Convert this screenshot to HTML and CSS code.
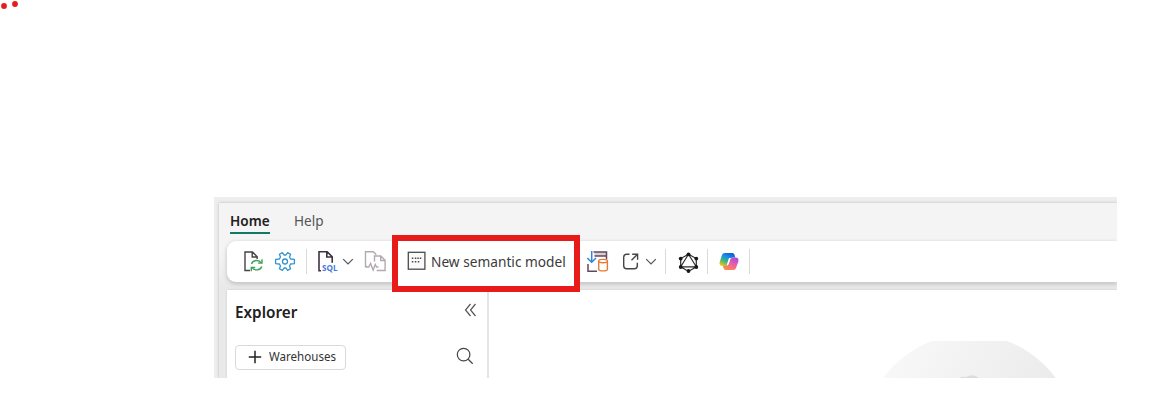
FILE: index.html
```html
<!DOCTYPE html>
<html lang="en">
<head>
<meta charset="utf-8">
<title>Warehouse</title>
<link rel="stylesheet" href="styles.css">
</head>
<body>
<svg class="dots" width="24" height="12" viewBox="0 0 24 12"><circle cx="4" cy="6" r="2.9" fill="#e81b1b"/><circle cx="15" cy="4" r="2.9" fill="#e81b1b"/></svg>
<div class="frame">
 <div class="app">
  <nav class="tabs"><a class="tab active"><span class="t-home">Home</span></a><a class="tab"><span class="t-help">Help</span></a></nav>
  <div class="toolbar">
   <svg class="icon refresh" viewBox="0 0 24 24"><path d="M9 21.500H4V3h7.500l4.700 4.800v2.200M11.200 3.200v4.800h4.800" fill="none" stroke="#454345" stroke-width="1.400"/><path d="M10.500 15c1.200-4.300 7.800-4.600 9.700-1.200M21 10.200v3.900h-3.900M20.800 17.500c-1.200 4.200-7.700 4.400-9.700 1.200M10.300 22.300v-3.900h3.900" fill="none" stroke="#3fa257" stroke-width="1.400"/></svg>
   <svg class="icon gear" viewBox="0 0 24 24"><g fill="none" stroke="#3294cf" stroke-width="1.300" stroke-linejoin="round"><path d="M9.400 3.600 11 6h2l1.600-2.400 3 1.700L16.500 8l1.100 2 3.800.4v4.200l-3.800.4-1.100 2 1.100 2.700-3 1.700L13 19h-2l-1.600 2.400-3-1.700L7.500 17l-1.100-2-3.800-.4v-4.200l3.800-.4 1.100-2-1.100-2.700z"/><circle cx="12" cy="12.500" r="2.500"/></g></svg>
   <i class="sep s1"></i>
   <svg class="icon sql" viewBox="0 0 24 24"><path d="M6 21.800H4V2.800h8.200l5 5v6M11.800 3v5H17" fill="none" stroke="#3d353f" stroke-width="1.600"/><text x="7" y="22.300" textLength="15.500" lengthAdjust="spacingAndGlyphs">SQL</text></svg>
   <svg class="chev c1" viewBox="0 0 12 12"><path d="M1.200 3.200 6 8l4.800-4.800" fill="none" stroke="#555" stroke-width="1.200"/></svg>
   <svg class="icon copy" viewBox="0 0 24 24"><g fill="none" stroke="#b3a9b3" stroke-width="1.400"><path d="M4 17.500H2.500V2.800h7.800l3 3M11.500 12.500V7h6.300l4.300 4.300v10.200h-8.500M17.700 7.200v4.300h4.300M2.500 18h3.200l1.900-3.500 2.500 6.500 2.200-5.500 1.200 2.500h2"/></g></svg>
   <div class="callout">
    <svg class="model" viewBox="0 0 20 20"><rect x="1.300" y="1.300" width="16.600" height="16.900" fill="#fafafa" stroke="#4b4b4b" stroke-width="1.300"/><path d="M4.800 7.300h1.500M7.800 7.300h1.500M10.300 7.300h1.500M12.800 7.300h1.500M4.800 10.800h1.500M7.800 10.800h1.500M10.800 10.800h1.500" stroke="#494949" stroke-width="1.500"/></svg>
    <span class="t-model">New semantic model</span>
   </div>
   <svg class="icon load" viewBox="0 0 24 24"><path d="M8.500 3.200h12V7H8.500" fill="#d3d3ce"/><path d="M7.500 3h13v7.500M8.500 7h12M2 15v7.200h9" fill="none" stroke="#64475e" stroke-width="1.500"/><path d="M5.700 2v11M1.300 9l4.400 4.300L10 9" fill="none" stroke="#3481df" stroke-width="1.500"/><path d="M12.700 12.200v8c0 2.200 8.700 2.200 8.700 0v-8" fill="#fff" stroke="#e77a30" stroke-width="1.400"/><ellipse cx="17.050" cy="12.100" rx="4.350" ry="1.700" fill="#fff" stroke="#e77a30" stroke-width="1.400"/></svg>
   <svg class="icon share" viewBox="0 0 24 24"><path d="M10.500 5.200H7.700a3 3 0 0 0-3 3v8.600a3 3 0 0 0 3 3h7.600a3 3 0 0 0 3-3v-3M13.200 5.200h5.400v5.500M18.500 5.300l-6 6" fill="none" stroke="#454545" stroke-width="1.400"/></svg>
   <svg class="chev c2" viewBox="0 0 12 12"><path d="M1.200 3.200 6 8l4.800-4.800" fill="none" stroke="#555" stroke-width="1.200"/></svg>
   <i class="sep s2"></i>
   <svg class="icon graph" viewBox="0 0 24 24"><path d="m12.500 5.300 7.800 4.200v8.300l-7.800 4.600-7.800-4.600V9.500zM12.500 5.300l7.800 12.500H4.700z" fill="none" stroke="#2b2b2b" stroke-width="1.200"/><g fill="#181818"><circle cx="12.500" cy="5.300" r="1.900"/><circle cx="20.300" cy="9.600" r="1.900"/><circle cx="20.300" cy="18" r="1.900"/><circle cx="12.500" cy="22" r="1.900"/><circle cx="4.700" cy="18" r="1.900"/><circle cx="4.700" cy="9.600" r="1.900"/></g></svg>
   <i class="sep s3"></i>
   <svg class="icon copilot" viewBox="0 0 24 24"><defs><linearGradient id="cool" x1="0.8" y1="0" x2="0.2" y2="1"><stop offset="0" stop-color="#1756cc"/><stop offset=".4" stop-color="#1697e5"/><stop offset=".67" stop-color="#45b578"/><stop offset="1" stop-color="#efc51b"/></linearGradient><linearGradient id="warm" x1="0.8" y1="0" x2="0.2" y2="1"><stop offset="0" stop-color="#a44be5"/><stop offset=".5" stop-color="#f0619f"/><stop offset="1" stop-color="#fb923d"/></linearGradient></defs><path d="M8 4h7.400c1.400 0 1.800 1 2.200 2.200l.7 2.300h-2.500c-1.700 0-2.500.8-3 2.300l-1.500 4.600c-.4 1.100-1 1.500-2.200 1.500H5.500c-2.400 0-3.500-1.500-2.800-4L4.800 6.500C5.400 4.800 6.200 4 8 4z" fill="url(#cool)"/><path d="M16 21H8.600c-1.400 0-1.800-1-2.200-2.200l-.5-1.900h2.800c1.500 0 2.200-.8 2.700-2.300l1.500-4.500c.4-1.100 1-1.600 2.200-1.600h3.400c2.400 0 3.500 1.500 2.800 4l-2.100 6C18.600 20.200 17.800 21 16 21z" fill="url(#warm)"/><path d="m12 9 2.400.1c-.8.500-1 1.100-1.300 2l-1.400 4.200-1.300 1.200c-.5.200-1 .1-.7-.5z" fill="#fff"/></svg>
   <i class="sep s4"></i>
  </div>
  <div class="workspace">
   <aside class="explorer">
    <header class="head"><h1><span class="t-exp">Explorer</span></h1><svg class="collapse" viewBox="0 0 14 14"><path d="M7.500 1 2.500 7l5 6M12.500 1l-5 6 5 6" fill="none" stroke="#555" stroke-width="1.200"/></svg></header>
    <div class="row"><button class="add"><svg viewBox="0 0 14 14"><path d="M7 .8v12.400M.8 7h12.400" stroke="#222" stroke-width="1.500"/></svg><span class="t-wh">Warehouses</span></button><svg class="search" viewBox="0 0 18 18"><circle cx="7.600" cy="7.600" r="6.300" fill="none" stroke="#454545" stroke-width="1.200"/><path d="m12.200 12.200 4.500 4.500" stroke="#454545" stroke-width="1.300"/></svg></div>
   </aside>
   <main class="canvas"><svg class="art" viewBox="0 0 180 37"><defs><linearGradient id="disc" gradientUnits="userSpaceOnUse" x1="20" y1="0" x2="150" y2="80"><stop offset="0" stop-color="#f8f8f8"/><stop offset="1" stop-color="#ebebeb"/></linearGradient></defs><circle cx="89.500" cy="100" r="106.800" fill="url(#disc)"/><path d="M79 37q3-2 7-1 7-4 13 1z" fill="#dcdcdc"/></svg></main>
  </div>
 </div>
</div>
</body>
</html>
```
FILE: styles.css
```css
* { box-sizing: border-box; }
body { margin: 0; width: 1153px; height: 401px; overflow: hidden; background: #fff; font-family: "Noto Sans", "Open Sans", sans-serif; color: #292929; }
svg { display: block; flex: none; }
.dots { margin-bottom: 185px; }
.frame { margin-left: 214px; width: 903px; height: 181px; background: #eee; padding: 6px 0 0 5px; overflow: hidden; }
.app { height: 175px; background: linear-gradient(#f4f4f4 50px, #e9e9e9 85px); box-shadow: 0 0 3px #bbb; }
.tabs { height: 38px; display: flex; padding-left: 11px; gap: 24px; }
.tab { height: 31px; line-height: 35px; font-size: 14px; color: #555; white-space: nowrap; }
.tab.active { width: 40px; color: #202020; font-weight: 600; border-bottom: 2px solid #117865; }
.tab span, .t-model, .t-exp, .t-wh { display: inline-block; transform-origin: left; }
.t-home { transform: scale(.97, 1.03); }
.t-help { transform: scale(.97, 1.04); }
.toolbar { height: 41px; margin: 0 0 8px 8px; background: #fff; border-radius: 9px 0 0 9px; display: flex; align-items: center; box-shadow: 0 0 2px #ddd, 0 2px 4px #bcbcbc; }
.icon { width: 24px; height: 24px; margin-top: -1px; }
.refresh { margin-left: 14px; }
.gear { margin-left: 8px; }
.sep { width: 1px; height: 25px; background: #dadada; flex: none; }
.s1 { margin-left: 9px; }
.sql { margin-left: 8px; }
.sql text { font: 700 8.5px "Open Sans", sans-serif; fill: #4478d8; }
.chev { width: 12px; height: 12px; }
.c1 { margin-left: 3px; }
.copy { margin-left: 9px; }
.callout { width: 188px; height: 57px; margin: 4px 0 0 5px; border: 6px solid #e81b1b; background: #fff; z-index: 1; position: relative; display: flex; align-items: center; padding: 0 0 4px 9px; flex: none; }
.model { width: 20px; height: 20px; margin-top: -1px; }
.t-model { margin-left: 4px; font-size: 14px; line-height: 20px; white-space: nowrap; color: #3b3b3b; transform: scale(.978, 1.04); }
.load { margin-left: 6px; }
.share { margin-left: 9px; }
.c2 { margin-left: 2px; }
.s2 { margin-left: 8px; }
.graph { margin-left: 10px; }
.s3 { margin-left: 7px; }
.copilot { margin-left: 9px; }
.s4 { margin-left: 8px; }
.workspace { height: 88px; margin-left: 8px; display: flex; background: #e4e4e4; box-shadow: 0 0 2px #c8c8c8; }
.explorer { width: 260px; background: #fff; padding: 9px 11px 0 8px; }
.head { height: 26px; display: flex; justify-content: space-between; }
h1 { margin: 0; font-size: 15px; line-height: 27px; font-weight: 600; color: #202020; }
.t-exp { transform: scale(1.02, 1.06); }
.collapse { width: 14px; height: 14px; margin: 4px -1px 0 0; }
.row { margin-top: 20px; display: flex; justify-content: space-between; }
.add { width: 111px; height: 25px; border: 1px solid #d9d9d9; border-radius: 4px; background: #fff; display: flex; align-items: center; padding: 0 0 2px 12px; font: 12px "Noto Sans", sans-serif; color: #333; }
.add svg { width: 14px; height: 14px; }
.t-wh { margin-left: 7px; white-space: nowrap; transform: scaleX(.965); }
.search { width: 18px; height: 18px; margin: 2px 2px 0 0; }
.canvas { flex: 1; margin-left: 2px; background: #fff; padding: 51px 0 0 391px; }
.art { width: 180px; height: 37px; }
```
